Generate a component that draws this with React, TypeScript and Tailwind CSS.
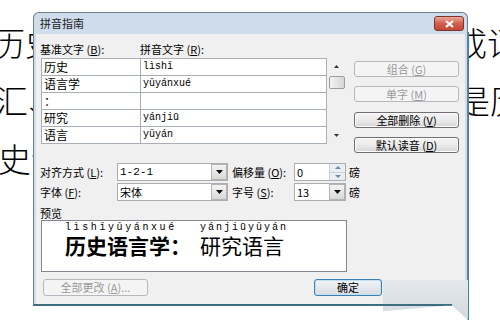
import type { ReactNode } from 'react';

const cjk = "font-['Noto_Sans_CJK_SC',sans-serif]";
const mono = "font-['Liberation_Mono',monospace]";

const Key = ({ k }: { k: string }) => <span className="underline underline-offset-[1px]">{k}</span>;

const Label = ({ text, k, className = '' }: { text: string; k: string; className?: string }) => (
  <span className={`text-[11px] leading-[13px] text-black whitespace-nowrap ${className}`}>
    {text} (<Key k={k} />):
  </span>
);

const Btn = ({
  children,
  disabled,
  primary,
  className = '',
}: {
  children: ReactNode;
  disabled?: boolean;
  primary?: boolean;
  className?: string;
}) => {
  const look = disabled
    ? 'border-[#b5b9bd] bg-[#f4f4f4] text-[#9a9a9a]'
    : primary
      ? 'border-[#3c7fb1] bg-linear-to-b from-[#f1f4f7] to-[#d8dde3] text-black shadow-[inset_0_0_0_1px_#bfe0f5]'
      : 'border-[#707070] bg-linear-to-b from-[#f4f4f4] via-[#ebebeb] to-[#d6d6d6] text-black shadow-[inset_0_0_0_1px_#fbfbfb]';
  return (
    <div className={`flex items-center justify-center rounded-[3px] border text-[11px] leading-none ${look} ${className}`}>
      {children}
    </div>
  );
};

const DownTri = () => (
  <svg width="7" height="4" viewBox="0 0 7 4">
    <path d="M0 0h7L3.5 4z" fill="#111" />
  </svg>
);

const Combo = ({ value, className = '', valueClass = '' }: { value: string; className?: string; valueClass?: string }) => (
  <div className={`flex h-[18px] border border-[#abadb3] bg-white ${className}`}>
    <span className={`flex-1 pl-[2px] text-[11px] leading-[16px] ${valueClass}`}>{value}</span>
    <div className="flex w-[16px] items-center justify-center border border-[#b4b4b4] bg-linear-to-b from-[#f4f4f4] to-[#d9d9d9]">
      <DownTri />
    </div>
  </div>
);

const Spin = ({ value }: { value: string }) => (
  <div className="flex h-[18px] w-[52px] border border-[#abadb3] bg-white">
    <span className="flex-1 pl-[2px] text-[11px] leading-[16px]">{value}</span>
    <div className="flex w-[16px] flex-col border-l border-[#c9d3dc]">
      <div className="flex flex-1 items-center justify-center bg-[#e8eef4]">
        <svg width="6" height="3" viewBox="0 0 6 3">
          <path d="M0 3h6L3 0z" fill="#6f8aa3" />
        </svg>
      </div>
      <div className="flex flex-1 items-center justify-center border-t border-[#c9d3dc] bg-[#e8eef4]">
        <svg width="6" height="3" viewBox="0 0 6 3">
          <path d="M0 0h6L3 3z" fill="#6f8aa3" />
        </svg>
      </div>
    </div>
  </div>
);

const rows = [
  ['历史', 'lìshǐ'],
  ['语言学', 'yǔyánxué'],
  ['：', ''],
  ['研究', 'yánjiū'],
  ['语言', 'yǔyán'],
];

export default function App() {
  return (
    <div className={`relative h-[324px] w-[500px] overflow-hidden bg-white ${cjk}`}>
      {/* document text behind the dialog */}
      <div className="whitespace-nowrap pt-[13px] text-[33px] font-light leading-[58px] text-black">
        <div className="ml-[-8px]">历史语言学研究语言在语音、构成词</div>
        <div className="ml-[-5px]">汇、语法等要素的发展与变化即是历史</div>
        <div className="ml-[-2px]">史语言学的研究内容。</div>
      </div>

      {/* word window edge */}
      <div className="absolute left-[467px] top-[32px] h-[288px] w-[2px] bg-[#3b84ad]" />

      {/* dialog */}
      <div className="absolute left-[33px] top-[12px] flex h-[294px] w-[435px] flex-col rounded-t-[6px] border border-b-2 border-[#6f7f90] border-b-[#3e6e80] bg-[#cfdcec]">
        <div className="flex h-[21px] items-start justify-between pl-[6px] pr-[3px] pt-[3px]">
          <span className="text-[11px] leading-[14px] text-[#1b1b1b]">拼音指南</span>
          <div className="flex h-[15px] w-[30px] items-center justify-center rounded-[3px] border border-[#80352c] bg-linear-to-b from-[#e9a799] via-[#d3604e] to-[#c14636]">
            <svg width="9" height="8" viewBox="0 0 9 8">
              <path d="M1 1l7 6M8 1L1 7" stroke="#fff" strokeWidth="2.2" />
            </svg>
          </div>
        </div>

        <div className="mx-[2px] flex-1 bg-[#f0f0f0] pl-[4px] pt-[9px]">
          <div className="flex">
            <div className="w-[306px]">
              <div className="flex h-[15px]">
                <Label text="基准文字" k="B" className="w-[100px]" />
                <Label text="拼音文字" k="R" />
              </div>
              <div className="flex">
                <div className="ml-[1px] h-[86px] w-[286px] border border-[#a8aeb5] bg-white">
                  {rows.map(([h, p], i) => (
                    <div key={i} className={`flex h-[17px] ${i < rows.length - 1 ? 'border-b border-[#a8aeb5]' : ''}`}>
                      <div className="w-[99px] border-r border-[#a8aeb5] pl-[2px] text-[12px] leading-[16px]">{h}</div>
                      <div className={`flex-1 pl-[2px] text-[10px] leading-[16px] ${mono}`}>{p}</div>
                    </div>
                  ))}
                </div>
                <div className="ml-[1px] flex h-[86px] w-[17px] flex-col items-center">
                  <div className="flex h-[17px] items-center justify-center">
                    <svg width="5" height="3" viewBox="0 0 5 3">
                      <path d="M0 3h5L2.5 0z" fill="#333" />
                    </svg>
                  </div>
                  <div className="mt-[1px] h-[13px] w-[16px] rounded-[2px] border border-[#9a9ea3] bg-linear-to-r from-[#f3f3f3] to-[#d6d6d6]" />
                  <div className="flex-1" />
                  <div className="flex h-[17px] items-center justify-center">
                    <svg width="5" height="3" viewBox="0 0 5 3">
                      <path d="M0 0h5L2.5 3z" fill="#333" />
                    </svg>
                  </div>
                </div>
              </div>
            </div>
            <div className="ml-[8px] w-[105px] pt-[18px]">
              <Btn disabled className="h-[16px]">
                组合 (<Key k="G" />)
              </Btn>
              <Btn disabled className="mt-[9px] h-[16px]">
                单字 (<Key k="M" />)
              </Btn>
              <Btn className="mt-[10px] h-[16px]">
                全部删除 (<Key k="V" />)
              </Btn>
              <Btn className="mt-[9px] h-[16px]">
                默认读音 (<Key k="D" />)
              </Btn>
            </div>
          </div>

          <div className="mt-[10px] flex h-[18px] items-center">
            <Label text="对齐方式" k="L" className="w-[77px]" />
            <Combo value="1-2-1" className="w-[111px]" valueClass={mono} />
            <Label text="偏移量" k="O" className="w-[66px] pl-[4px]" />
            <Spin value="0" />
            <span className="ml-[3px] text-[11px]">磅</span>
          </div>
          <div className="mt-[2px] flex h-[18px] items-center">
            <Label text="字体" k="F" className="w-[77px]" />
            <Combo value="宋体" className="w-[111px]" />
            <Label text="字号" k="S" className="w-[66px] pl-[4px]" />
            <Combo value="13" className="w-[52px]" />
            <span className="ml-[3px] text-[11px]">磅</span>
          </div>

          <div className="mt-[6px] text-[11px] leading-[13px]">预览</div>
          <div className="ml-[1px] flex h-[52px] w-[306px] border border-[#828790] bg-white pl-[23px] pt-[1px]">
            <div className="flex w-[135px] flex-col">
              <span className={`text-[10px] leading-[11px] tracking-[2.6px] ${mono}`}>lìshǐyǔyánxué</span>
              <span className="text-[21px] font-bold leading-[24px]">历史语言学：</span>
            </div>
            <div className="flex flex-col">
              <span className={`text-[10px] leading-[11px] tracking-[2px] ${mono}`}>yánjiūyǔyán</span>
              <span className="text-[21px] leading-[24px]">研究语言</span>
            </div>
          </div>

          <div className="mt-[7px] flex">
            <Btn disabled className="ml-[3px] h-[17px] w-[105px]">
              全部更改 (<Key k="A" />)...
            </Btn>
            <Btn primary className="ml-[166px] h-[17px] w-[68px]">
              确定
            </Btn>
          </div>
        </div>
      </div>

      {/* shadow corner at lower right */}
      <div className="absolute left-[383px] top-[280px] h-[40px] w-[85px] bg-linear-to-b from-[#e4e8ec] to-[#d3d9df] [clip-path:polygon(0_0,100%_0,100%_100%,81%_63%,0_78%)]">
        <div className="mt-[24px] h-[2px] w-[69px] bg-[#3e6e80]" />
      </div>
    </div>
  );
}
